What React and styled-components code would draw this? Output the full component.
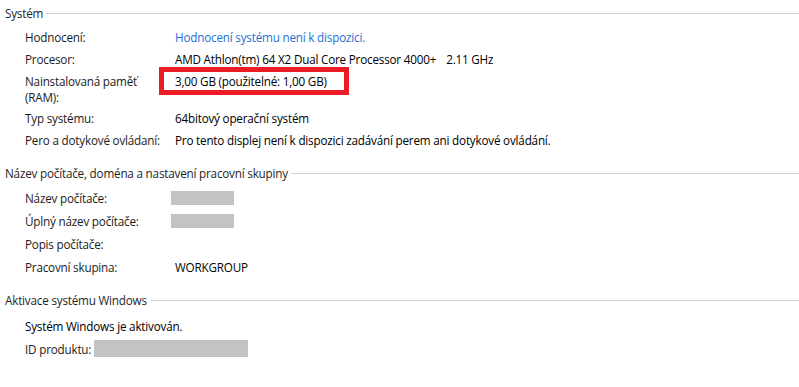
import React from 'react';
import styled, { createGlobalStyle } from 'styled-components';

const GlobalStyle = createGlobalStyle`
  html, body {
    margin: 0;
    padding: 0;
    background: #ffffff;
  }
  body {
    font-family: "Segoe UI", "Open Sans", "Noto Sans", sans-serif;
    font-size: 11.7px;
    letter-spacing: -0.2px;
    color: #1b1b1b;
  }
`

const Page = styled.div`
  width: 799px;
  height: 387px;
  padding-top: 5px;
  box-sizing: border-box;
  overflow: hidden;
`

const Section = styled.section`
  & + & {
    margin-top: ${props => props.gap || 12}px;
  }
`

const Header = styled.div`
  display: flex;
  align-items: center;
  gap: 3px;
  height: 16px;
  line-height: 16px;
  padding-left: 5px;
  color: #1e1e1e;
  white-space: nowrap;
  &::after {
    content: '';
    flex: 1;
    height: 1px;
    background: #d0d0d0;
  }
`

const Rows = styled.div`
  display: flex;
  flex-direction: column;
  padding-left: 25px;
  margin-top: ${props => props.offset || 5}px;
`

const Row = styled.div`
  display: flex;
  align-items: ${props => props.top ? 'flex-start' : 'center'};
  min-height: ${props => props.height || 22}px;
  line-height: 16px;
`

const Label = styled.div`
  box-sizing: border-box;
  width: ${props => props.width ? `${props.width}px` : 'auto'};
  flex-shrink: 0;
  white-space: ${props => props.wrap ? 'normal' : 'nowrap'};
  padding: ${props => props.wrap ? '3px 12px 2px 0' : '0'};
  margin-right: ${props => props.after || 0}px;
`

const Value = styled.div`
  white-space: nowrap;
  padding-top: ${props => props.top ? 3 : 0}px;
  color: ${props => props.link ? '#1f6fd4' : '#000000'};
  cursor: ${props => props.link ? 'pointer' : 'default'};
`

const Marked = styled.span`
  position: relative;
`

const Marker = styled.span`
  position: absolute;
  left: -16px;
  top: -6px;
  width: 190px;
  height: 28px;
  border: 5px solid #ed1c24;
  box-sizing: border-box;
`

const Redacted = styled.div`
  width: ${props => props.width}px;
  height: ${props => props.height || 14}px;
  margin-left: ${props => props.shift || 0}px;
  background: #c3c3c3;
`

const Spaced = styled.span`
  margin-left: 10px;
`

export default function App() {
  return (
    <>
      <GlobalStyle />
      <Page>
        <Section>
          <Header>Systém</Header>
          <Rows>
            <Row>
              <Label width={150}>Hodnocení:</Label>
              <Value link>Hodnocení systému není k dispozici.</Value>
            </Row>
            <Row>
              <Label width={150}>Procesor:</Label>
              <Value>
                AMD Athlon(tm) 64 X2 Dual Core Processor 4000+<Spaced>2.11 GHz</Spaced>
              </Value>
            </Row>
            <Row top>
              <Label width={150} wrap>Nainstalovaná paměť (RAM):</Label>
              <Value top>
                <Marked>
                  3,00 GB (použitelné: 1,00 GB)
                  <Marker />
                </Marked>
              </Value>
            </Row>
            <Row>
              <Label width={150}>Typ systému:</Label>
              <Value>64bitový operační systém</Value>
            </Row>
            <Row>
              <Label width={150}>Pero a dotykové ovládaní:</Label>
              <Value>Pro tento displej není k dispozici zadávání perem ani dotykové ovládání.</Value>
            </Row>
          </Rows>
        </Section>

        <Section gap={11}>
          <Header>Název počítače, doména a nastavení pracovní skupiny</Header>
          <Rows offset={5}>
            <Row height={23}>
              <Label width={150}>Název počítače:</Label>
              <Redacted width={63} shift={-4} />
            </Row>
            <Row height={23}>
              <Label width={150}>Úplný název počítače:</Label>
              <Redacted width={63} shift={-4} />
            </Row>
            <Row height={23}>
              <Label width={150}>Popis počítače:</Label>
            </Row>
            <Row height={23}>
              <Label width={150}>Pracovní skupina:</Label>
              <Value>WORKGROUP</Value>
            </Row>
          </Rows>
        </Section>

        <Section gap={14}>
          <Header>Aktivace systému Windows</Header>
          <Rows offset={6}>
            <Row height={23}>
              <Value>Systém Windows je aktivován.</Value>
            </Row>
            <Row height={23}>
              <Label after={3}>ID produktu:</Label>
              <Redacted width={154} height={17} />
            </Row>
          </Rows>
        </Section>
      </Page>
    </>
  );
}
